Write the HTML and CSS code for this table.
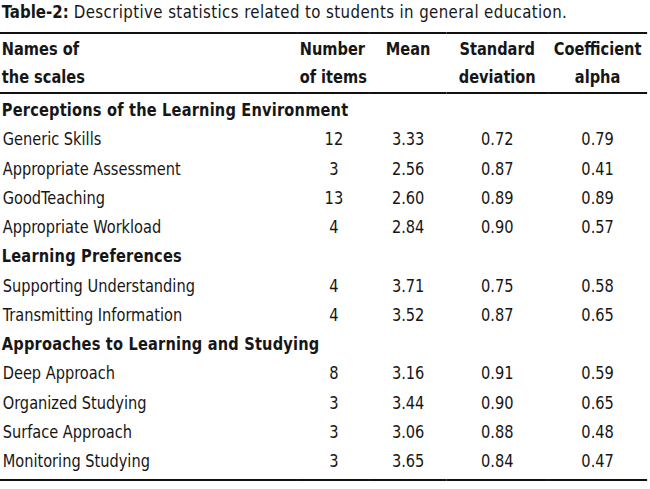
FILE: index.html
```html
<!DOCTYPE html>
<html>
<head>
<meta charset="utf-8">
<link rel="stylesheet" href="styles.css">
</head>
<body>
<div class="frame">
<div class="page">
  <div class="caption"><b>Table-2:</b> Descriptive statistics related to students in general education.</div>
  <table class="stats">
    <colgroup>
      <col class="c1"><col class="c2"><col class="c3"><col class="c4"><col class="c5">
    </colgroup>
    <thead>
      <tr>
        <th class="name">Names of<br>the scales</th>
        <th class="num">Number<br>of items</th>
        <th class="mean">Mean<br>&nbsp;</th>
        <th>Standard<br>deviation</th>
        <th>Coefficient<br>alpha</th>
      </tr>
    </thead>
    <tbody>
      <tr class="sec"><td colspan="5">Perceptions of the Learning Environment</td></tr>
      <tr><td class="name">Generic Skills</td><td>12</td><td>3.33</td><td>0.72</td><td>0.79</td></tr>
      <tr><td class="name">Appropriate Assessment</td><td>3</td><td>2.56</td><td>0.87</td><td>0.41</td></tr>
      <tr><td class="name">GoodTeaching</td><td>13</td><td>2.60</td><td>0.89</td><td>0.89</td></tr>
      <tr><td class="name">Appropriate Workload</td><td>4</td><td>2.84</td><td>0.90</td><td>0.57</td></tr>
      <tr class="sec"><td colspan="5">Learning Preferences</td></tr>
      <tr><td class="name">Supporting Understanding</td><td>4</td><td>3.71</td><td>0.75</td><td>0.58</td></tr>
      <tr><td class="name">Transmitting Information</td><td>4</td><td>3.52</td><td>0.87</td><td>0.65</td></tr>
      <tr class="sec"><td colspan="5">Approaches to Learning and Studying</td></tr>
      <tr><td class="name">Deep Approach</td><td>8</td><td>3.16</td><td>0.91</td><td>0.59</td></tr>
      <tr><td class="name">Organized Studying</td><td>3</td><td>3.44</td><td>0.90</td><td>0.65</td></tr>
      <tr><td class="name">Surface Approach</td><td>3</td><td>3.06</td><td>0.88</td><td>0.48</td></tr>
      <tr><td class="name">Monitoring Studying</td><td>3</td><td>3.65</td><td>0.84</td><td>0.47</td></tr>
    </tbody>
  </table>
</div>
</div>
</body>
</html>
```
FILE: styles.css
```css
html, body {
  margin: 0;
  padding: 0;
  background: #fff;
  overflow: hidden;
}
.frame {
  width: 650px;
  height: 489px;
  overflow: hidden;
}
/* The source uses a tall, narrow condensed face; DejaVu Sans Condensed
   is squeezed horizontally to match its proportions. */
.page {
  width: 719px;
  font-family: "DejaVu Sans Condensed", "DejaVu Sans", sans-serif;
  color: #161616;
  transform: scaleX(0.9);
  transform-origin: 0 0;
}
.caption {
  height: 32px;
  box-sizing: border-box;
  padding: 1px 0 0 2px;
  font-size: 18.5px;
  line-height: 22px;
  letter-spacing: 0.45px;
  white-space: nowrap;
}
.caption b {
  font-weight: bold;
  letter-spacing: 0;
}
.stats {
  width: 719px;
  border-collapse: collapse;
  table-layout: fixed;
  border-top: 2px solid #111;
  border-bottom: 2px solid #111;
  font-size: 18px;
}
.c1 { width: 331px; }
.c2 { width: 80px; }
.c3 { width: 85px; }
.c4 { width: 113px; }
.c5 { width: 110px; }
.stats th {
  font-weight: bold;
  line-height: 28px;
  padding: 1px 0;
  text-align: center;
  vertical-align: top;
  border-bottom: 2px solid #111;
  white-space: nowrap;
}
.stats th.name {
  text-align: left;
  padding-left: 2px;
}
.stats th.num {
  text-align: left;
  padding-left: 2px;
}
.stats td {
  height: 26.25px;
  padding: 3px 0 0 0;
  line-height: 26.25px;
  text-align: center;
  white-space: nowrap;
}
.stats td.name {
  text-align: left;
  padding-left: 3px;
}
.stats tr.sec td {
  text-align: left;
  padding-left: 2px;
  font-weight: bold;
  letter-spacing: 0.22px;
}
.stats tbody tr:last-child td {
  padding-bottom: 5px;
}
```
